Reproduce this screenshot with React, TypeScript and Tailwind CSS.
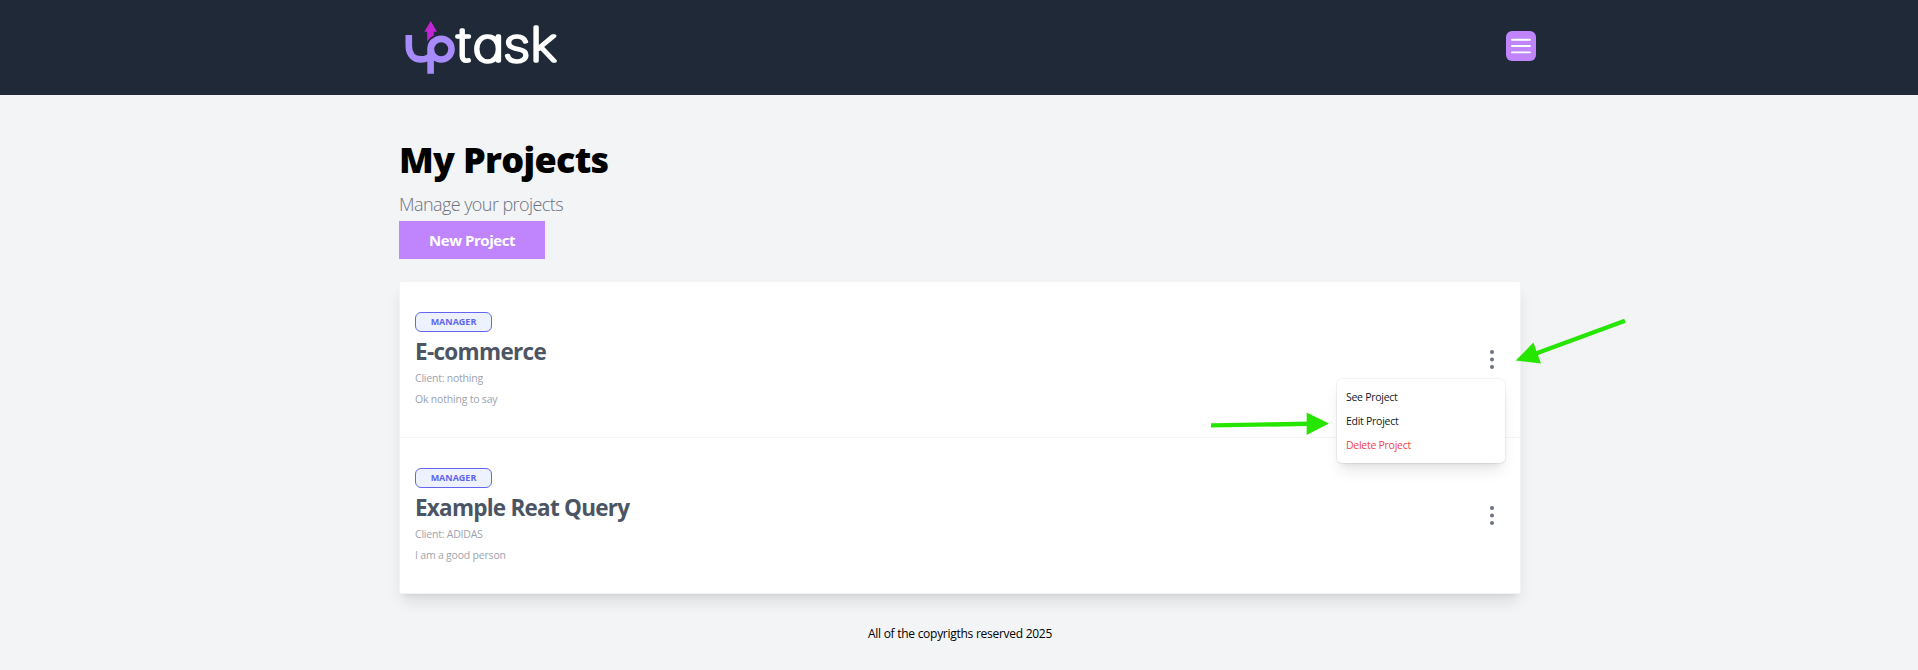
type Project = { name: string; client: string; description: string; nameTracking: string };

const projects: Project[] = [
  { name: "E-commerce", client: "nothing", description: "Ok nothing to say", nameTracking: "tracking-[-0.68px]" },
  { name: "Example Reat Query", client: "ADIDAS", description: "I am a good person", nameTracking: "tracking-[-0.76px]" },
];

function Logo() {
  return (
    <svg width="160" height="65" viewBox="0 0 160 65" aria-label="uptask">
      <path d="M31.7 6 L38 16.8 H34.8 V20.6 Q30.5 22.6 28.2 26.6 V16.8 H25.4 Z" fill="#c026d3" />
      <g fill="none" stroke="#a78bfa" strokeWidth="6.6">
        <path d="M9.8 20 V31 C9.8 39.5 15 44.4 22 44.4 C27 44.4 30.5 42.5 32.5 39.5" />
        <circle cx="42.2" cy="34.2" r="10.3" />
        <path d="M31.6 58.8 V34.2 C31.6 31 33 28 35.3 26.2" />
      </g>
      <text
        transform="translate(58 46) scale(1.18 1)"
        dx="0 2.6 -1 0.2"
        fontFamily="Inter, sans-serif"
        fontSize="46"
        fontWeight="100"
        fill="#fff"
        stroke="#fff"
        strokeWidth="3.5"
        strokeLinejoin="round"
        style={{ fontFeatureSettings: "'cv11'" }}
      >
        task
      </text>
    </svg>
  );
}

function MenuButton() {
  return (
    <button className="size-[30px] rounded-[6px] bg-[#c084fc] flex items-center justify-center" aria-label="Menu">
      <svg width="30" height="30" viewBox="0 0 30 30" stroke="#fff" strokeWidth="1.9" strokeLinecap="round">
        <path d="M6 8.7h18M6 15h18M6 21.4h18" />
      </svg>
    </button>
  );
}

function OptionsMenu() {
  return (
    <div className="absolute right-[15px] top-[97px] z-10 w-[168px] rounded-[5px] bg-white py-[6px] text-[10.5px] leading-[24px] tracking-[-0.27px] text-[#111827] shadow-lg ring-1 ring-gray-900/5">
      <p className="px-[9px]">See Project</p>
      <p className="px-[9px]">Edit Project</p>
      <p className="px-[9px] text-[#ef4444]">Delete Project</p>
    </div>
  );
}

function ProjectRow({ project, open }: { project: Project; open: boolean }) {
  return (
    <li className="relative flex h-[156px] items-center justify-between border-b border-[#f3f4f6] pl-[15px] pr-[13.5px] last:h-[155px] last:border-b-0">
      <div className="flex h-full flex-col items-start pt-[30px]">
        <span className="h-[20px] w-[77px] rounded-[6px] border border-[#6366f1] bg-[#eef2ff] text-center text-[9px] font-bold leading-[18px] text-[#6366f1]">
          MANAGER
        </span>
        <h2 className={`mt-[6px] text-[22.5px] font-bold leading-[28px] text-[#4b5563] ${project.nameTracking}`}>{project.name}</h2>
        <p className="mt-[4px] text-[10.5px] leading-[16px] tracking-[-0.22px] text-[#9ca3af]">Client: {project.client}</p>
        <p className="mt-[5px] text-[10.5px] leading-[16px] tracking-[-0.2px] text-[#9ca3af]">{project.description}</p>
      </div>
      <svg className="h-[31px] w-[30px]" viewBox="0 0 30 31" fill="#6b7280">
        <circle cx="15" cy="8" r="2" />
        <circle cx="15" cy="15.5" r="2" />
        <circle cx="15" cy="23" r="2" />
      </svg>
      {open && <OptionsMenu />}
    </li>
  );
}

function Arrows() {
  return (
    <svg className="pointer-events-none absolute left-[1200px] top-[310px] z-20" width="440" height="140" viewBox="1200 310 440 140" fill="#26e600">
      <path d="M1625 320.8L1536 353.5" stroke="#26e600" strokeWidth="4.4" />
      <path d="M1515.7 360.6L1533.4 342.6L1541 363.4Z" />
      <path d="M1211 425.4L1309 423.8" stroke="#26e600" strokeWidth="4.4" />
      <path d="M1329 423.4L1306.7 412.6V435Z" />
    </svg>
  );
}

export default function App() {
  return (
    <div className="relative min-h-screen overflow-hidden bg-[#f3f4f6] font-['Open_Sans','Noto_Sans',sans-serif] text-black">
      <header className="h-[95px] bg-[#1f2937]">
        <div className="ml-[384px] flex w-[1152px] items-start justify-between pl-[15px] pt-[15px]">
          <Logo />
          <div className="pt-[16px]">
            <MenuButton />
          </div>
        </div>
      </header>

      <main className="ml-[384px] w-[1152px] px-[15px] pt-[47px]">
        <h1 className="text-[36px] font-extrabold leading-[36px] tracking-[-0.7px]">My Projects</h1>
        <p className="mt-[14px] text-[18px] font-light leading-[24px] tracking-[-0.57px] text-[#6b7280]">Manage your projects</p>
        <button className="mt-[5px] block h-[38px] w-[146px] bg-[#c084fc] text-[15px] font-bold tracking-[-0.45px] text-white">
          New Project
        </button>

        <ul className="mt-[22px] border border-[#f3f4f6] bg-white shadow-lg">
          {projects.map((project, i) => (
            <ProjectRow key={project.name} project={project} open={i === 0} />
          ))}
        </ul>
      </main>

      <footer className="ml-[384px] w-[1152px] pt-[31px] text-center text-[12px] leading-[18px] tracking-[-0.27px]">
        All of the copyrigths reserved 2025
      </footer>
      <Arrows />
    </div>
  );
}
